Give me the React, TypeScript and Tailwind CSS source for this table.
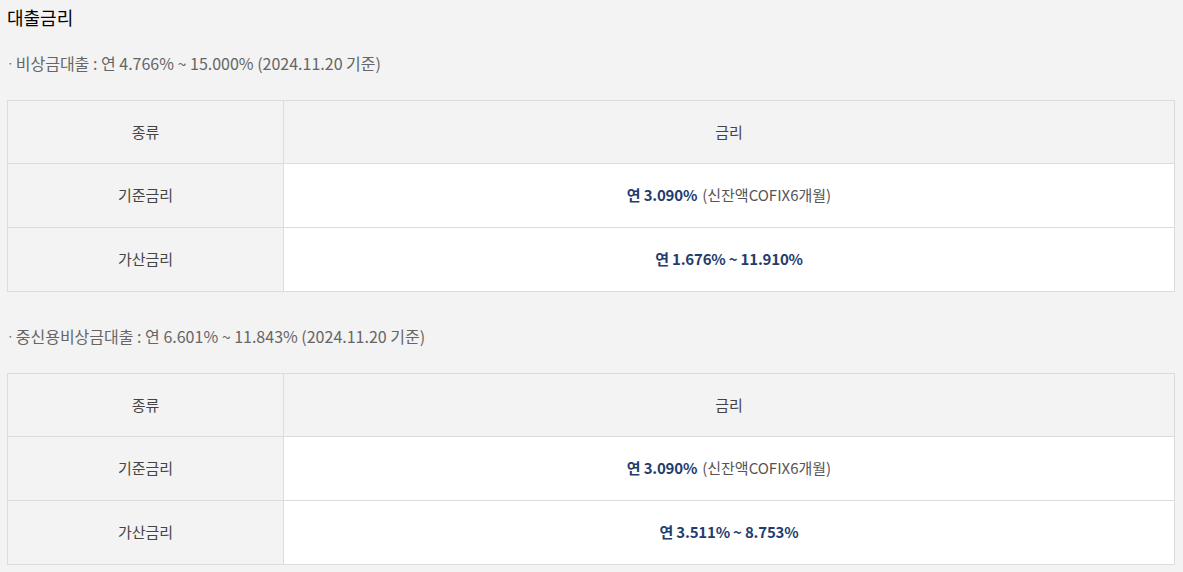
const font = { fontFamily: '"Noto Sans CJK KR", "Noto Sans", sans-serif' };

type Row = { label: string; main: string; note?: string };

const tables: { caption: string; rows: Row[] }[] = [
  {
    caption: "비상금대출 : 연 4.766% ~ 15.000% (2024.11.20 기준)",
    rows: [
      { label: "기준금리", main: "연 3.090%", note: "(신잔액COFIX6개월)" },
      { label: "가산금리", main: "연 1.676% ~ 11.910%" },
    ],
  },
  {
    caption: "중신용비상금대출 : 연 6.601% ~ 11.843% (2024.11.20 기준)",
    rows: [
      { label: "기준금리", main: "연 3.090%", note: "(신잔액COFIX6개월)" },
      { label: "가산금리", main: "연 3.511% ~ 8.753%" },
    ],
  },
];

function RateTable({ rows }: { rows: Row[] }) {
  return (
    <table className="w-[1168px] border-collapse text-[15px]">
      <thead>
        <tr className="h-[63px] bg-[#f3f3f3] text-[#444]">
          <th className="w-[276px] border border-[#dcdcdc] font-normal">종류</th>
          <th className="border border-[#dcdcdc] font-normal">금리</th>
        </tr>
      </thead>
      <tbody>
        {rows.map((r) => (
          <tr key={r.label} className="h-[64px]">
            <td className="border border-[#dcdcdc] bg-[#f3f3f3] text-center text-[#444]">
              {r.label}
            </td>
            <td className="border border-[#dcdcdc] bg-white text-center">
              <span className="font-bold tracking-[-0.2px] text-[#1f3d6e]">{r.main}</span>
              {r.note && (
                <span className="ml-[5px] text-[15px] text-[#555]">{r.note}</span>
              )}
            </td>
          </tr>
        ))}
      </tbody>
    </table>
  );
}

export default function App() {
  return (
    <div className="min-h-[572px] bg-[#f3f3f3] px-[7px] pt-[4px]" style={font}>
      <h2 className="text-[18px] leading-[26px] text-black">대출금리</h2>

      {tables.map((t, i) => (
        <div key={i} className={i === 0 ? "mt-[22px]" : "mt-[33px]"}>
          <p className="flex items-center text-[16px] leading-[22px] text-[#666]">
            <span className="mr-[2px] text-[12px]">·</span>
            {t.caption}
          </p>
          <div className="mt-[26px]">
            <RateTable rows={t.rows} />
          </div>
        </div>
      ))}
    </div>
  );
}
